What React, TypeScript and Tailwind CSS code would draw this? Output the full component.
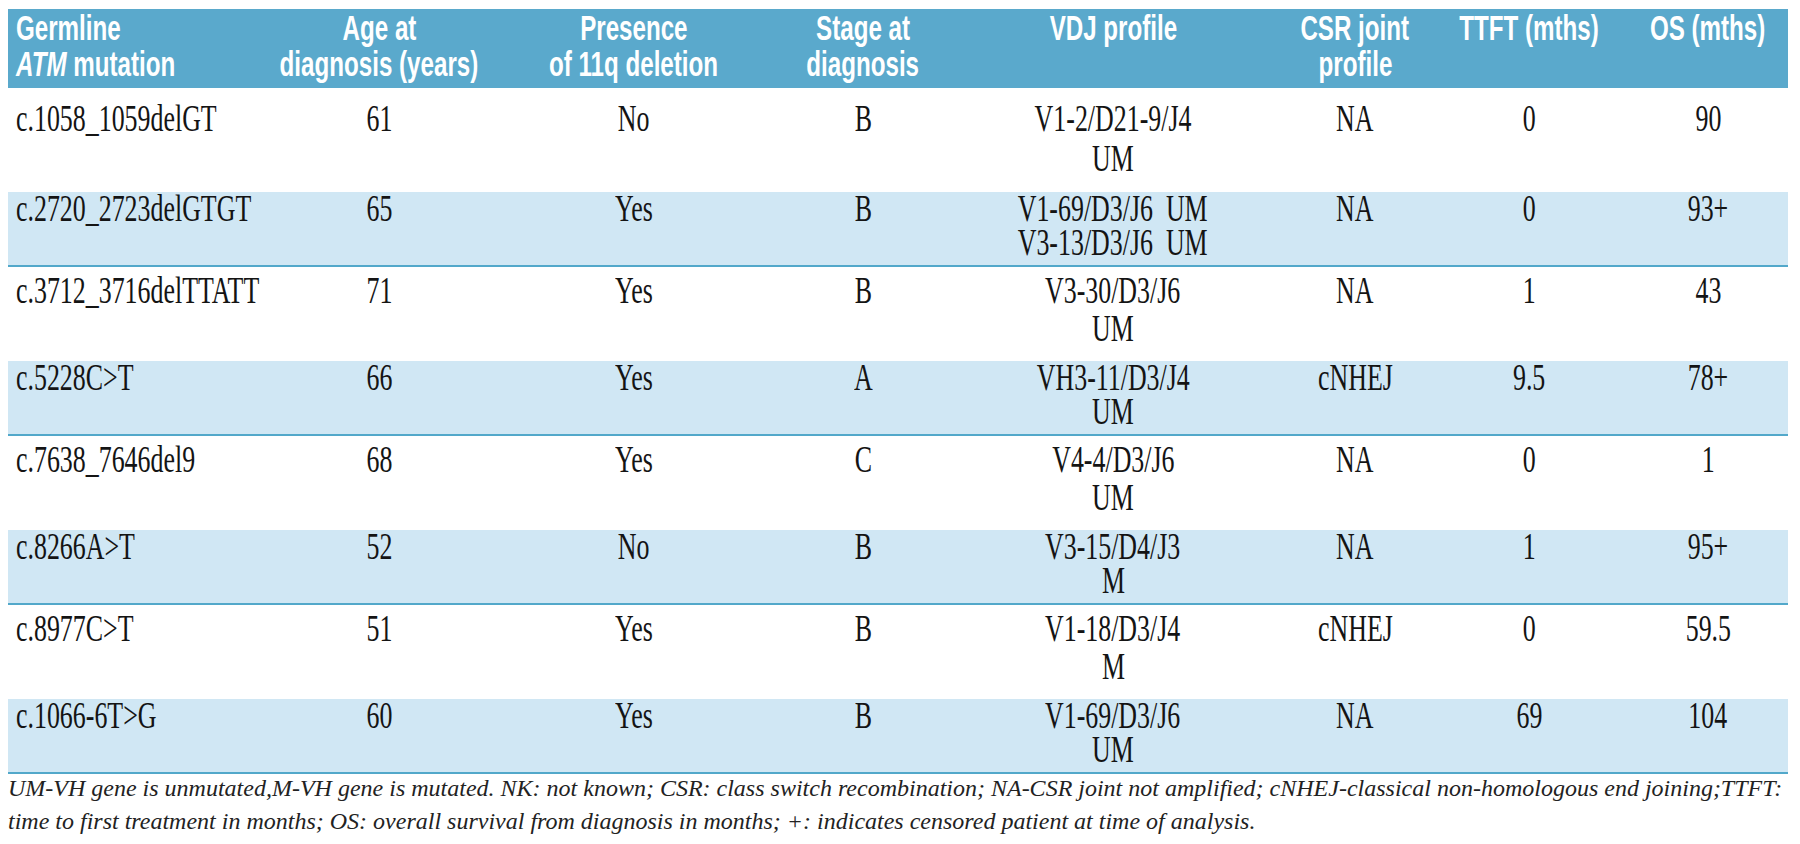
import clsx from "clsx";

// Column widths, first column is left aligned, the rest centred
const widths = [
  "w-[262px]",
  "w-[218px]",
  "w-[292px]",
  "w-[166px]",
  "w-[334px]",
  "w-[150px]",
  "w-[198px]",
  "w-[160px]",
];

type Line = React.ReactNode;

const header: Line[][] = [
  ["Germline", <><i>ATM</i> mutation</>],
  ["Age at", "diagnosis (years)"],
  ["Presence", "of 11q deletion"],
  ["Stage at", "diagnosis"],
  ["VDJ profile"],
  ["CSR joint", "profile"],
  ["TTFT (mths)"],
  ["OS (mths)"],
];

const rows: string[][][] = [
  [["c.1058_1059delGT"], ["61"], ["No"], ["B"], ["V1-2/D21-9/J4", "UM"], ["NA"], ["0"], ["90"]],
  [["c.2720_2723delGTGT"], ["65"], ["Yes"], ["B"], ["V1-69/D3/J6  UM", "V3-13/D3/J6  UM"], ["NA"], ["0"], ["93+"]],
  [["c.3712_3716delTTATT"], ["71"], ["Yes"], ["B"], ["V3-30/D3/J6", "UM"], ["NA"], ["1"], ["43"]],
  [["c.5228C>T"], ["66"], ["Yes"], ["A"], ["VH3-11/D3/J4", "UM"], ["cNHEJ"], ["9.5"], ["78+"]],
  [["c.7638_7646del9"], ["68"], ["Yes"], ["C"], ["V4-4/D3/J6", "UM"], ["NA"], ["0"], ["1"]],
  [["c.8266A>T"], ["52"], ["No"], ["B"], ["V3-15/D4/J3", "M"], ["NA"], ["1"], ["95+"]],
  [["c.8977C>T"], ["51"], ["Yes"], ["B"], ["V1-18/D3/J4", "M"], ["cNHEJ"], ["0"], ["59.5"]],
  [["c.1066-6T>G"], ["60"], ["Yes"], ["B"], ["V1-69/D3/J6", "UM"], ["NA"], ["69"], ["104"]],
];

// A cell: each line is its own horizontally condensed span
const Cell = ({ lines, col, head }: { lines: Line[]; col: number; head?: boolean }) => {
  const left = col === 0;
  return (
    <div
      className={clsx(
        widths[col],
        "shrink-0 flex flex-col whitespace-pre",
        left ? "items-start pl-[8px]" : "items-center"
      )}>
      {lines.map((l, i) => (
        <span
          key={i}
          className={clsx(
            "inline-block shrink-0",
            head ? "scale-x-[0.69]" : "scale-x-70",
            left ? "origin-left" : "origin-center"
          )}>
          {l}
        </span>
      ))}
    </div>
  );
};

export default function App() {
  return (
    <div className="min-h-screen bg-white pt-[9px] pl-[8px]">
      <div className="w-[1780px]">
        {/* Header */}
        <div className="flex h-[79px] pt-[1px] bg-[#5aa9cc] text-white font-bold text-[35px] leading-[36px] [font-family:'Liberation_Sans',Arial,sans-serif]">
          {header.map((lines, c) => (
            <Cell key={c} lines={lines} col={c} head />
          ))}
        </div>

        {/* Body rows */}
        <div className="text-[37px] text-[#141414] [font-family:'Liberation_Serif','Times_New_Roman',serif]">
          {rows.map((row, r) => {
            const shaded = r % 2 === 1;
            return (
              <div
                key={r}
                className={clsx(
                  "flex",
                  shaded
                    ? "h-[75px] leading-[34px] bg-[#d0e7f4] border-b-2 border-[#52a8ca]"
                    : r === 0
                      ? "h-[104px] pt-[11px] leading-[40px] bg-white"
                      : "h-[94px] pt-[5px] leading-[38px] bg-white"
                )}>
                {row.map((lines, c) => (
                  <Cell key={c} lines={lines} col={c} />
                ))}
              </div>
            );
          })}
        </div>

        {/* Footnote */}
        <p className="mt-[-2px] italic text-[24px] leading-[33px] text-[#222] whitespace-nowrap [font-family:'Liberation_Serif','Times_New_Roman',serif]">
          UM-VH gene is unmutated,M-VH gene is mutated. NK: not known; CSR: class switch recombination; NA-CSR joint not amplified; cNHEJ-classical non-homologous end joining;TTFT:
          <br />
          time to first treatment in months; OS: overall survival from diagnosis in months; +: indicates censored patient at time of analysis.
        </p>
      </div>
    </div>
  );
}
